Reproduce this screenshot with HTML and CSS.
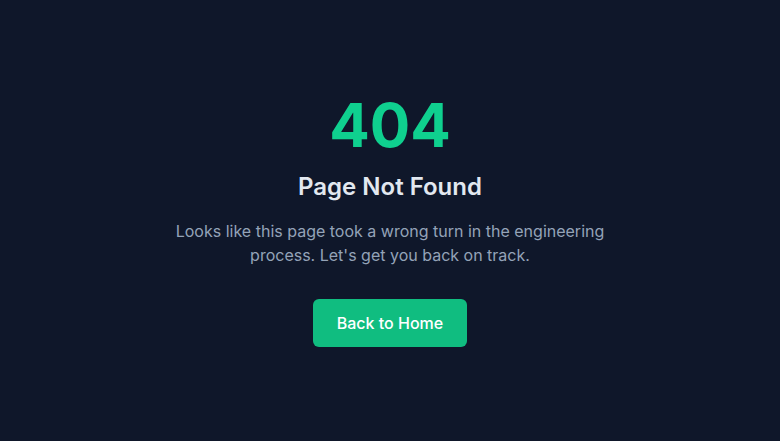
FILE: index.html
```html
<!DOCTYPE html>
<html lang="en">
<head>
    <meta charset="UTF-8">
    <meta name="viewport" content="width=device-width, initial-scale=1.0">
    <title>404 - Page Not Found</title>
    <link rel="stylesheet" href="styles.css">
</head>
<body>
    <main class="not-found">
        <div class="error-code">404</div>
        <h1 class="error-title">Page Not Found</h1>
        <p class="error-text">Looks like this page took a wrong turn in the engineering process. Let's get you back on track.</p>
        <a href="#" class="home-btn">Back to Home</a>
    </main>
</body>
</html>
```

FILE: styles.css
```css
body {
    font-family: Inter, "Noto Sans", sans-serif;
    margin: 0;
    background-color: #0f172a;
}
.not-found {
    min-height: 100vh;
    display: flex;
    flex-direction: column;
    align-items: center;
    justify-content: center;
    text-align: center;
    padding: 0 20px;
    box-sizing: border-box;
}
.error-code {
    font-size: 60px;
    font-weight: 700;
    line-height: 1;
    color: #0fd08f;
    margin-bottom: 16px;
}
.error-title {
    font-size: 24px;
    font-weight: 600;
    line-height: 32px;
    color: #e2e8f0;
    margin: 0 0 16px;
}
.error-text {
    font-size: 16px;
    line-height: 24px;
    color: #94a3b8;
    max-width: 448px;
    margin: 0 0 32px;
}
.home-btn {
    display: inline-block;
    background-color: #10bd80;
    color: white;
    text-decoration: none;
    font-size: 16px;
    font-weight: 500;
    line-height: 24px;
    padding: 12px 24px;
    border-radius: 6px;
}
.home-btn:hover {
    background-color: #059669;
}
```
